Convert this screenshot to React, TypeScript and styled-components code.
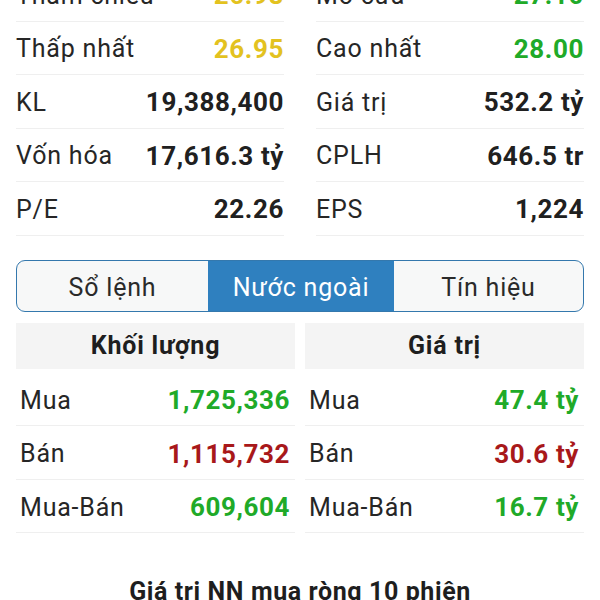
import React, { useState } from "react";
import styled, { createGlobalStyle } from "styled-components";

// -------------------- GLOBAL -------------------- //

const GlobalStyle = createGlobalStyle`
  html, body {
    margin: 0;
    padding: 0;
    background: #ffffff;
    overflow: hidden;
  }
  body {
    font-family: Roboto, "Noto Sans", "Liberation Sans", sans-serif;
    color: #222222;
  }
`;

// -------------------- PAGE -------------------- //

const Page = styled.div`
  width: 600px;
  height: 600px;
  overflow: hidden;
  background: #ffffff;
`;

// scrolled so the first row sits partly above the viewport
const Scroller = styled.div`
  margin-top: -32px;
  padding: 0 16px;
  display: flex;
  flex-direction: column;
`;

// -------------------- PRICE SUMMARY -------------------- //

const SummaryGrid = styled.div`
  display: grid;
  grid-template-columns: 1fr 1fr;
  column-gap: 32px;
`;

const SummaryRow = styled.div`
  box-sizing: border-box;
  height: 53.5px;
  padding-top: 2px;
  border-bottom: 1px solid #efefef;
  display: flex;
  align-items: center;
  justify-content: space-between;
`;

const Label = styled.span`
  font-size: 25px;
  color: #262626;
  letter-spacing: 0.8px;
`;

const Value = styled.span<{ tone?: string }>`
  font-size: 26px;
  font-weight: 700;
  letter-spacing: 0.6px;
  color: ${({ tone }) => tone || "#202020"};
`;

// -------------------- TABS -------------------- //

const Tabs = styled.div`
  margin-top: 24px;
  height: 50px;
  display: grid;
  grid-template-columns: 191px 186px 1fr;
  border: 1px solid #3478ad;
  border-radius: 9px;
  overflow: hidden;
  background: #f7f8f8;
`;

const Tab = styled.button<{ active: boolean }>`
  border: none;
  margin: 0;
  padding: 3px 0 0;
  font-family: inherit;
  font-size: 25px;
  letter-spacing: 0.8px;
  cursor: pointer;
  background: ${({ active }) => (active ? "#2f80bf" : "transparent")};
  color: ${({ active }) => (active ? "#ffffff" : "#2a2a2a")};
`;

// -------------------- FOREIGN TRADE TABLE -------------------- //

const TradeGrid = styled.div`
  margin-top: 11px;
  display: grid;
  grid-template-columns: 279px 1fr;
  column-gap: 10px;
`;

const Column = styled.div`
  display: flex;
  flex-direction: column;
`;

const HeaderCell = styled.div`
  height: 46px;
  margin-bottom: 4px;
  background: #f4f4f4;
  display: flex;
  align-items: center;
  justify-content: center;
  font-size: 25px;
  font-weight: 700;
  letter-spacing: 0.8px;
  color: #1e1e1e;
`;

const TradeRow = styled.div`
  box-sizing: border-box;
  height: 53.5px;
  padding: 3px 5px 0 4px;
  border-bottom: 1px solid #efefef;
  display: flex;
  align-items: center;
  justify-content: space-between;
`;

const ChartTitle = styled.h2`
  margin: 44px 0 0;
  text-align: center;
  font-size: 25px;
  font-weight: 700;
  color: #1e1e1e;
  letter-spacing: 0.6px;
`;

// -------------------- DATA -------------------- //

const YELLOW = "#e3c21f";
const GREEN = "#20aa28";
const RED = "#a8181a";

const summary: [string, string, string?][][] = [
  [
    ["Tham chiếu", "26.98", YELLOW],
    ["Mở cửa", "27.10", GREEN],
  ],
  [
    ["Thấp nhất", "26.95", YELLOW],
    ["Cao nhất", "28.00", GREEN],
  ],
  [
    ["KL", "19,388,400"],
    ["Giá trị", "532.2 tỷ"],
  ],
  [
    ["Vốn hóa", "17,616.3 tỷ"],
    ["CPLH", "646.5 tr"],
  ],
  [
    ["P/E", "22.26"],
    ["EPS", "1,224"],
  ],
];

const volume = [
  { label: "Mua", value: "1,725,336", tone: GREEN },
  { label: "Bán", value: "1,115,732", tone: RED },
  { label: "Mua-Bán", value: "609,604", tone: GREEN },
];

const amount = [
  { label: "Mua", value: "47.4 tỷ", tone: GREEN },
  { label: "Bán", value: "30.6 tỷ", tone: RED },
  { label: "Mua-Bán", value: "16.7 tỷ", tone: GREEN },
];

const tabs = ["Sổ lệnh", "Nước ngoài", "Tín hiệu"];

// -------------------- MAIN COMPONENT -------------------- //

const App: React.FC = () => {
  const [activeTab, setActiveTab] = useState(1);

  return (
    <Page>
      <GlobalStyle />
      <Scroller>
        <SummaryGrid>
          {summary.flat().map(([label, value, tone]) => (
            <SummaryRow key={label}>
              <Label>{label}</Label>
              <Value tone={tone}>{value}</Value>
            </SummaryRow>
          ))}
        </SummaryGrid>

        <Tabs>
          {tabs.map((t, i) => (
            <Tab key={t} active={i === activeTab} onClick={() => setActiveTab(i)}>
              {t}
            </Tab>
          ))}
        </Tabs>

        <TradeGrid>
          <Column>
            <HeaderCell>Khối lượng</HeaderCell>
            {volume.map((r) => (
              <TradeRow key={r.label}>
                <Label>{r.label}</Label>
                <Value tone={r.tone}>{r.value}</Value>
              </TradeRow>
            ))}
          </Column>
          <Column>
            <HeaderCell>Giá trị</HeaderCell>
            {amount.map((r) => (
              <TradeRow key={r.label}>
                <Label>{r.label}</Label>
                <Value tone={r.tone}>{r.value}</Value>
              </TradeRow>
            ))}
          </Column>
        </TradeGrid>

        <ChartTitle>Giá trị NN mua ròng 10 phiên</ChartTitle>
      </Scroller>
    </Page>
  );
};

export default App;
